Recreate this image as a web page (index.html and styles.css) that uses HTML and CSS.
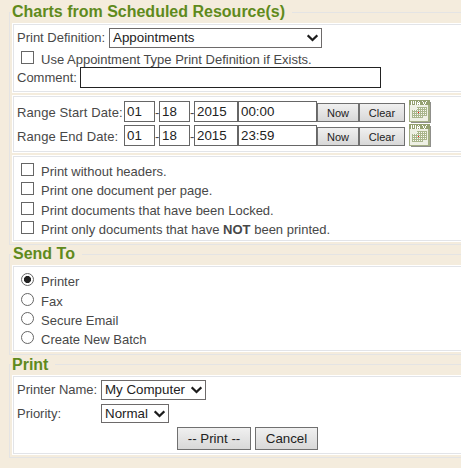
FILE: index.html
```html
<!DOCTYPE html>
<html lang="en">
<head>
<meta charset="utf-8">
<title>Charts from Scheduled Resource(s)</title>
<link rel="stylesheet" href="styles.css">
</head>
<body>
<svg class="defs" width="0" height="0" aria-hidden="true">
  <defs>
    <pattern id="days" width="2" height="2" patternUnits="userSpaceOnUse">
      <rect width="2" height="2" fill="#a9b58c"/><rect width="1" height="1" fill="#fbfbf4"/>
    </pattern>
    <symbol id="cal" viewBox="0 0 23 23">
      <path d="M2 2h20v21H2z" fill="#8f8f8b"/>
      <rect width="21" height="22" fill="#a3ae84"/>
      <rect x="1" y="5" width="18" height="16" fill="#eef0e4"/>
      <rect width="21" height="5" fill="#94a070"/>
      <path d="M2.500 5V1M4.500 1v3M6.500 1v4M8.500 5V2M9.500 1v1M10.500 2v3M9 3.500h2M13 1.500h1M14.500 2v2M15.500 4v1M16.500 2v2M17 1.500h1" stroke="#fff" fill="none"/>
      <path d="M8 7h10v9h-4v2H3v-8h5z" fill="url(#days)"/>
      <rect x="9" y="12" width="1" height="1" fill="#f00"/>
    </symbol>
    <symbol id="chev" viewBox="0 0 11 8">
      <path d="M.7 1.300 5.500 6l4.800-4.700" fill="none" stroke="#1c1c1c" stroke-width="2.200"/>
    </symbol>
  </defs>
</svg>
<form class="page">
  <section class="group charts">
    <h2><span>Charts from Scheduled Resource(s)</span></h2>
    <div class="panel definition">
      <div class="row def-row">
        <label class="t-def" for="def">Print Definition:</label>
        <span class="select s-def"><select id="def"><option>Appointments</option></select><svg><use href="#chev"/></svg></span>
      </div>
      <label class="row option use-row"><input type="checkbox"><span class="t-use">Use Appointment Type Print Definition if Exists.</span></label>
      <div class="row comment-row">
        <label for="comment">Comment:</label><input id="comment" class="field comment" type="text">
      </div>
    </div>
    <div class="panel range">
      <div class="row date-row">
        <span class="date-label">Range Start Date:</span>
        <input class="field two" value="01"><i>-</i><input class="field two" value="18"><i>-</i><input class="field year" value="2015"><input class="field time" value="00:00">
        <button type="button" class="small now">Now</button><button type="button" class="small clear">Clear</button>
        <svg class="cal"><use href="#cal"/></svg>
      </div>
      <div class="row date-row">
        <span class="date-label">Range End Date:</span>
        <input class="field two" value="01"><i>-</i><input class="field two" value="18"><i>-</i><input class="field year" value="2015"><input class="field time" value="23:59">
        <button type="button" class="small now">Now</button><button type="button" class="small clear">Clear</button>
        <svg class="cal"><use href="#cal"/></svg>
      </div>
    </div>
    <div class="panel flags">
      <label class="row option"><input type="checkbox"><span>Print without headers.</span></label>
      <label class="row option"><input type="checkbox"><span>Print one document per page.</span></label>
      <label class="row option"><input type="checkbox"><span>Print documents that have been Locked.</span></label>
      <label class="row option"><input type="checkbox"><span>Print only documents that have <b>NOT</b> been printed.</span></label>
    </div>
  </section>
  <section class="group send">
    <h2><span>Send To</span></h2>
    <div class="panel targets">
      <label class="row option"><input type="radio" name="to" checked><span>Printer</span></label>
      <label class="row option"><input type="radio" name="to"><span>Fax</span></label>
      <label class="row option"><input type="radio" name="to"><span>Secure Email</span></label>
      <label class="row option"><input type="radio" name="to"><span>Create New Batch</span></label>
    </div>
  </section>
  <section class="group print">
    <h2><span>Print</span></h2>
    <div class="panel output">
      <div class="row out-row">
        <label class="out-label" for="printer">Printer Name:</label>
        <span class="select s-printer"><select id="printer"><option>My Computer</option></select><svg><use href="#chev"/></svg></span>
      </div>
      <div class="row out-row">
        <label class="out-label" for="priority">Priority:</label>
        <span class="select s-priority"><select id="priority"><option>Normal</option></select><svg><use href="#chev"/></svg></span>
      </div>
      <div class="actions"><button type="button" class="go">-- Print --</button><button type="button" class="cancel">Cancel</button></div>
    </div>
  </section>
</form>
</body>
</html>
```
FILE: styles.css
```css
* { box-sizing: border-box; }
html, body { margin: 0; height: 468px; overflow: hidden; }
body {
  background: #f4ecdd;
  color: #484848;
  font: 13px/16px "Liberation Sans", Arial, sans-serif;
}
.defs { display: block; }
.page { width: 480px; padding: 12px 0 0 9px; }
.group {
  border: 1px solid #e4e4e4;
  padding: 0 2px;
  display: flex;
  flex-direction: column;
  gap: 2px;
}
.charts { height: 233px; }
.send { height: 101px; margin-top: 9px; }
.print { height: 94px; margin-top: 9px; }
h2 {
  margin: -10px 0 -2px -1px;
  height: 20px;
  font-size: 16px;
  line-height: 19px;
  color: #5f8a1c;
  white-space: nowrap;
}
h2 span { display: inline-block; background: #f4ecdd; padding: 0 7px 0 1px; }
.send h2 span { padding-left: 2px; }
.send h2, .charts h2 { line-height: 18px; }
.panel {
  flex: none;
  background: #fff;
  border: 1px solid #e2e4e8;
  outline: 1px solid #fff;
  outline-offset: 0;
  margin: 1px;
  padding-left: 3px;
}
.definition { height: 68px; }
.range { height: 56px; padding-top: 3px; }
.flags { height: 85px; padding-top: 5px; }
.targets { height: 85px; padding-top: 5px; }
.output { height: 78px; }
.row { display: flex; align-items: center; white-space: nowrap; }
.def-row { height: 24px; }
.use-row { height: 20px; }
.comment-row { height: 16px; }
.t-def { width: 92px; }
.comment-row label { width: 63px; }
.t-def, .t-use, .comment-row label, .date-label, .date-row i, .out-label { margin-top: 1px; }
input, select, button { font-family: inherit; color: #222; margin: 0; }
.field {
  flex: none;
  height: 21px;
  border: 1px solid #666;
  border-radius: 0;
  background: #fff;
  padding: 0 2px;
  font-size: 13.33px;
  outline: 0;
}
.date-row .field { margin-bottom: 1px; }
.row .comment { width: 301px; border-color: #222; margin-top: 1px; }
.select { position: relative; flex: none; display: block; height: 20px; }
.select select {
  display: block;
  width: 100%;
  height: 100%;
  appearance: none;
  border: 1px solid #6d6a6a;
  border-radius: 0;
  background: #fff;
  padding: 0 3px;
  font-size: 13.33px;
  line-height: 16px;
}
.select svg { position: absolute; right: 4px; top: 6px; width: 11px; height: 8px; pointer-events: none; }
.s-def { width: 213px; margin-top: 2px; }
.s-printer { width: 105px; }
.s-priority { width: 68px; height: 19px; }
.option { padding-left: 4px; }
.option input {
  appearance: none;
  flex: none;
  width: 13px;
  height: 13px;
  margin: 0 7px 4px 0;
  border: 1px solid #666;
  background: #fff;
}
.use-row input { margin-bottom: 3px; }
.option input[type="radio"] { border-radius: 50%; }
.option input[type="radio"]:checked { background: radial-gradient(circle, #222 0 3.200px, #fff 3.900px); }
.flags .row, .targets .row { height: 19px; }
.flags .row:nth-child(2), .targets .row:nth-child(1) { height: 20px; padding-bottom: 1px; }
.date-row { height: 24px; }
.date-label { width: 107px; flex: none; letter-spacing: .1px; }
.date-row i { width: 4px; flex: none; font-style: normal; }
.two { width: 31px; }
.year { width: 44px; }
.time { width: 79px; }
button {
  border: 1px solid #707070;
  border-radius: 0;
  background: linear-gradient(#f0f0f0, #d8d8d8);
  padding: 0;
}
.small { flex: none; height: 19px; margin-top: 1px; font-size: 11px; }
.now { width: 42px; }
.clear { width: 46px; }
.cal { flex: none; width: 23px; height: 23px; margin: 0 0 1px 4px; }
.out-row { height: 24px; }
.out-label { width: 84px; }
.out-row .select { margin-top: 2px; }
.out-row .s-priority { margin-top: 1px; }
.actions { display: flex; gap: 4px; padding: 2px 0 0 160px; }
.actions button { height: 23px; font-size: 13.33px; }
.go { width: 74px; }
.cancel { width: 63px; }
```
